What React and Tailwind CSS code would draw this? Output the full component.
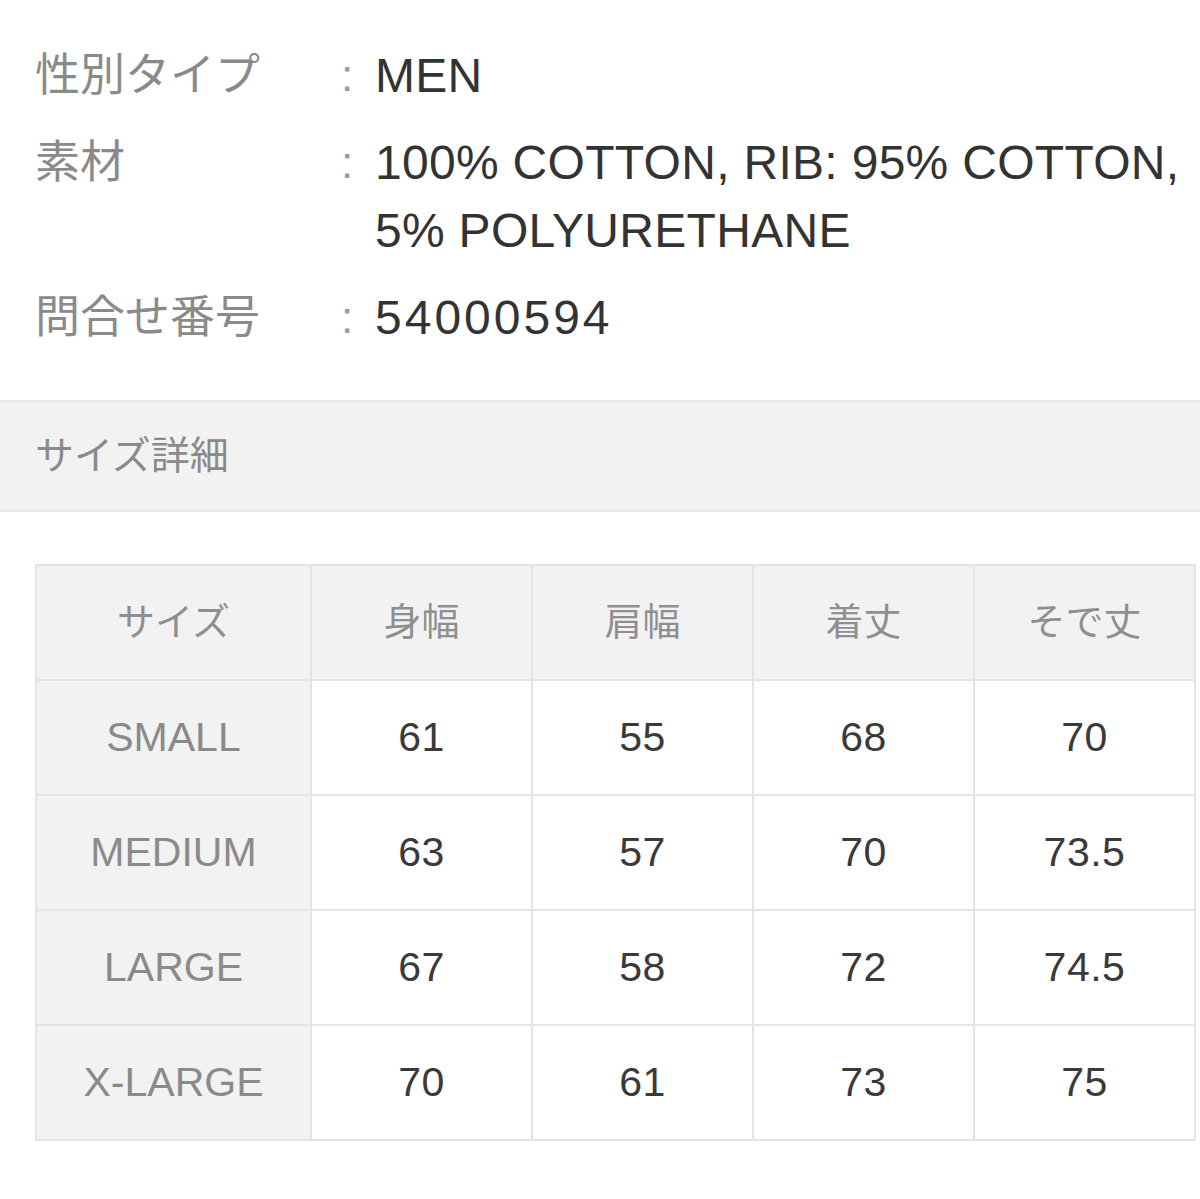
import React from 'react';

const specs = [
  { label: '性別タイプ', value: 'MEN' },
  { label: '素材', value: '100% COTTON, RIB: 95% COTTON, 5% POLYURETHANE' },
  { label: '問合せ番号', value: '54000594', wide: true },
];

const headers = ['サイズ', '身幅', '肩幅', '着丈', 'そで丈'];

const rows = [
  ['SMALL', '61', '55', '68', '70'],
  ['MEDIUM', '63', '57', '70', '73.5'],
  ['LARGE', '67', '58', '72', '74.5'],
  ['X-LARGE', '70', '61', '73', '75'],
];

export default function App() {
  return (
    <div className="w-[1200px] h-[1199px] overflow-hidden bg-white font-['Liberation_Sans','Noto_Sans_CJK_JP',sans-serif]">
      {/* 商品スペック */}
      <div className="pt-[42px] pl-[35px] flex flex-col gap-[19px]">
        {specs.map((s) => (
          <div key={s.label} className="flex items-start leading-[68px]">
            <div className="w-[306px] shrink-0 text-[45px] text-[#8a8a8a]">{s.label}</div>
            <div className="w-[34px] shrink-0 text-[44px] text-[#9a9a9a]">:</div>
            <div
              className={
                s.wide
                  ? 'flex-1 pr-[10px] text-[48px] text-[#333333] tracking-[3px]'
                  : 'flex-1 pr-[10px] text-[48px] text-[#333333] tracking-[0.3px]'
              }
            >
              {s.value}
            </div>
          </div>
        ))}
      </div>

      {/* サイズ詳細 見出し */}
      <div className="mt-[48px] h-[112px] flex items-center pl-[35px] bg-[#f2f2f2] border-y-2 border-[#e8e8e8]">
        <span className="text-[39px] text-[#8a8a8a]">サイズ詳細</span>
      </div>

      {/* サイズ表 */}
      <div className="mt-[52px] ml-[35px] w-[1161px] grid grid-cols-[273px_repeat(4,219px)] auto-rows-[113px] gap-[2px] p-[2px] bg-[#e4e4e4]">
        {headers.map((h) => (
          <div key={h} className="bg-[#f2f2f2] flex items-center justify-center text-[38px] text-[#8f8f8f]">
            {h}
          </div>
        ))}
        {rows.map((r) =>
          r.map((cell, i) => (
            <div
              key={r[0] + i}
              className={
                i === 0
                  ? 'bg-[#f2f2f2] flex items-center justify-center text-[41px] text-[#8a8a8a]'
                  : 'bg-white flex items-center justify-center text-[41px] text-[#3a3a3a] tracking-[0.5px]'
              }
            >
              {cell}
            </div>
          ))
        )}
      </div>
    </div>
  );
}
